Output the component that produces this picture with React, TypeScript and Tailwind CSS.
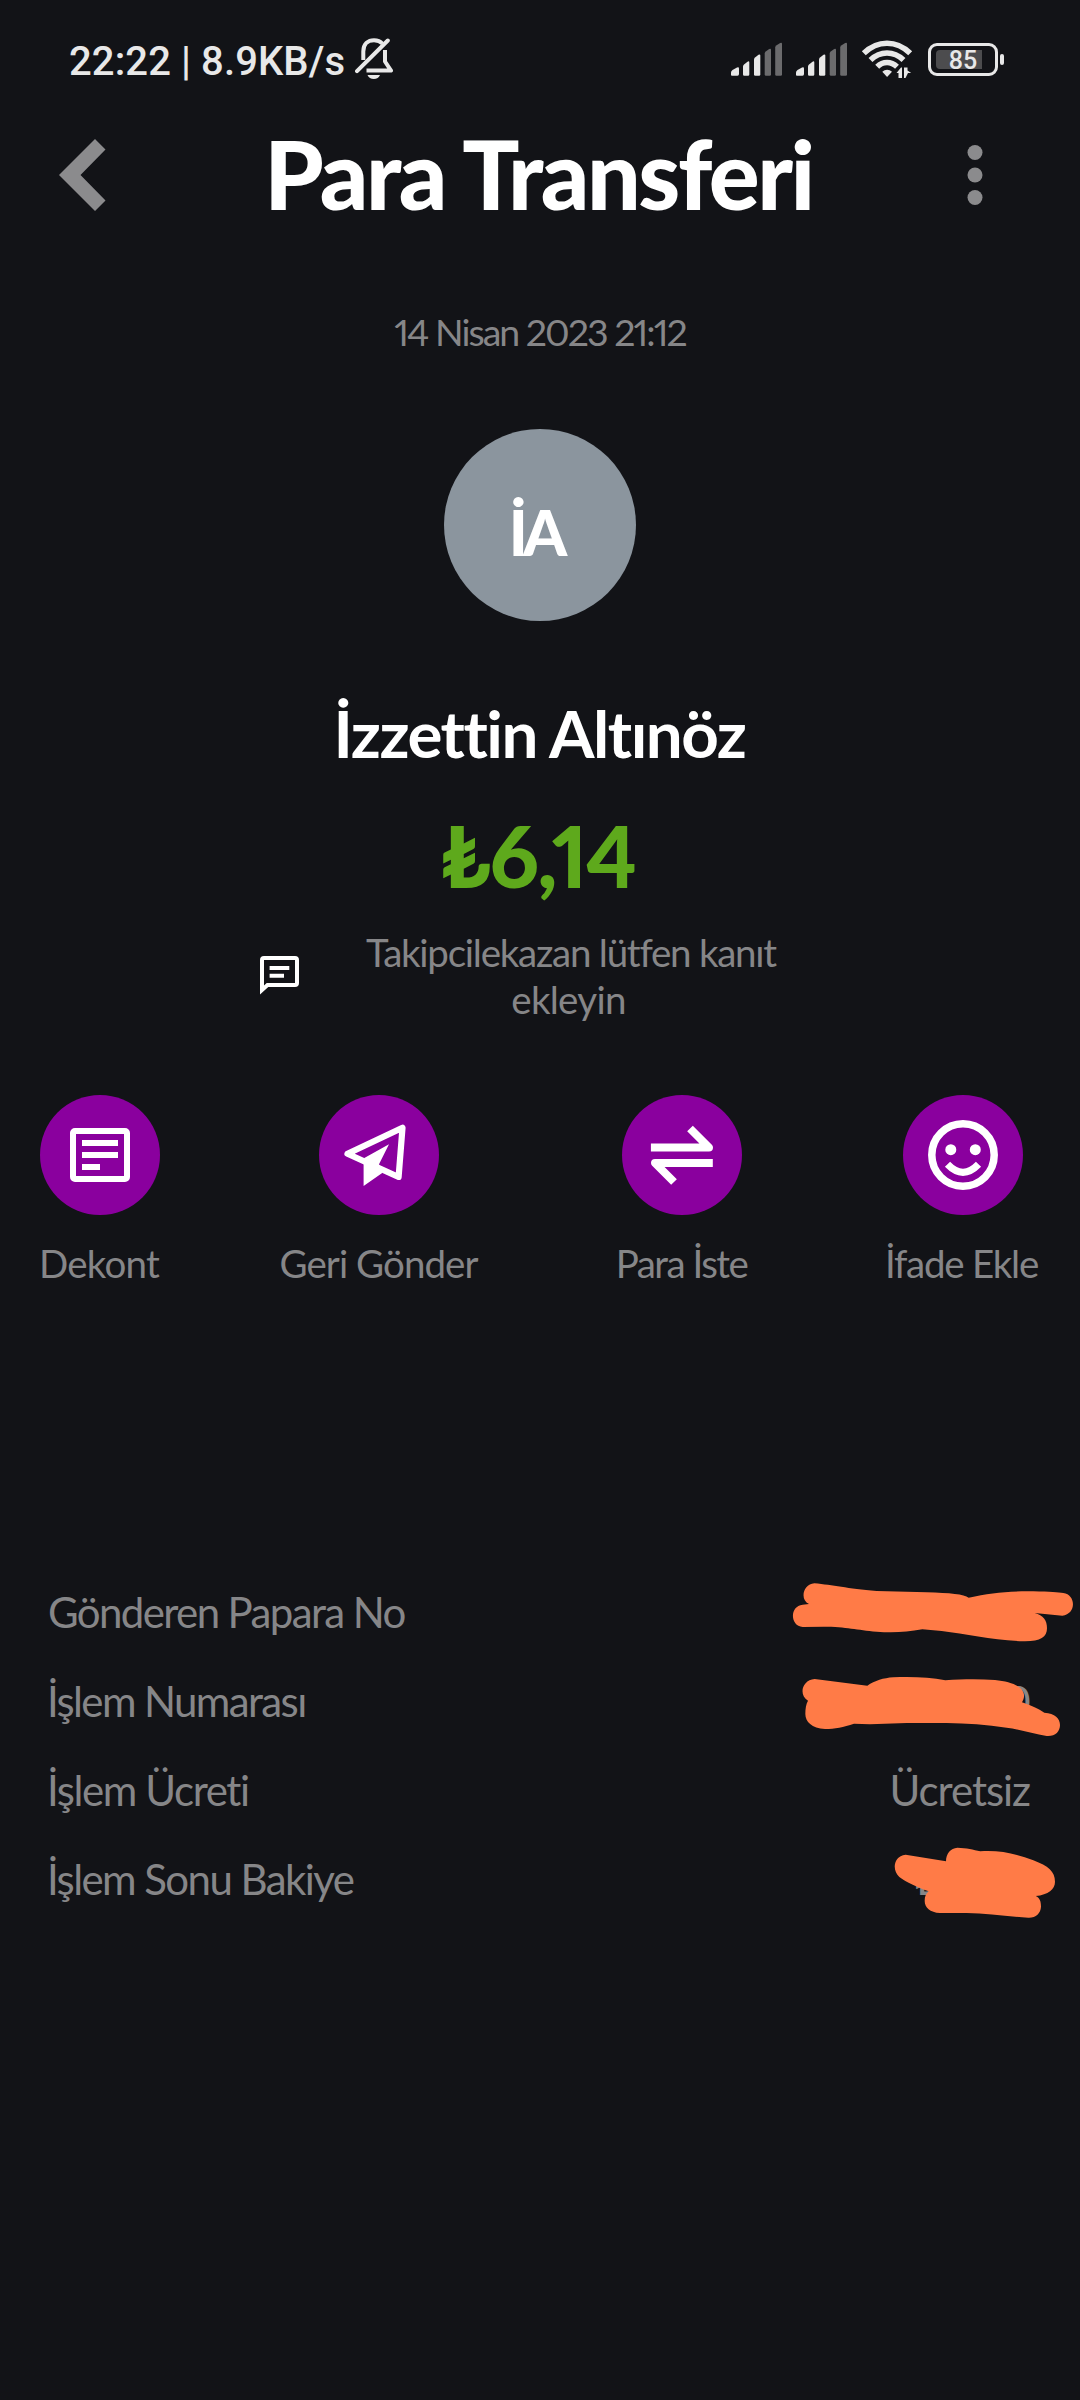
const SignalIcon = () => {
  return (
    <svg width="53" height="48" viewBox="0 0 53 48" fill="#e8e8e8">
      <path d="M0 38V35.500Q0 34 1.500 33L6 30.500Q8 29.700 8 31.500V37Q8 38.700 6.500 38.700H1Q0 38.700 0 38Z" />
      <path d="M12 37.500V29.500Q12 28.300 13 27.500L16.500 24.700Q18.300 23.700 18.300 25.500V37.500Q18.300 38.700 17 38.700H13.300Q12 38.700 12 37.500Z" />
      <path d="M23 37.500V22.500Q23 21.300 24 20.500L27.500 17.800Q29.300 16.800 29.300 18.500V37.500Q29.300 38.700 28 38.700H24.300Q23 38.700 23 37.500Z" />
      <g fill="#6b6b6d">
        <path d="M33.700 37.500V16.500Q33.700 15.300 34.700 14.500L38.200 12Q40 11 40 12.700V37.500Q40 38.700 38.700 38.700H35Q33.700 38.700 33.700 37.500Z" />
        <path d="M44.200 37.500V10.500Q44.200 9.300 45.200 8.500L49.200 6Q51 5 51 6.700V37.500Q51 38.700 49.700 38.700H45.500Q44.200 38.700 44.200 37.500Z" />
      </g>
    </svg>
  );
};

const BellOffIcon = () => {
  return (
    <svg
      className="-mt-[5px] ml-[10px]"
      width="38"
      height="42"
      viewBox="0 0 38 42"
      fill="none"
      stroke="#e8e8e8"
      strokeWidth="4"
      strokeLinecap="round"
      strokeLinejoin="round"
    >
      <path d="M2 33.200L32.800 2.500" />
      <path d="M8.300 22V13.500C8.300 6 13 2.200 19 2.200C22.500 2.200 25.300 3.200 27.300 5.500" strokeLinecap="butt" />
      <path d="M30 12V23.500L36 32.600H11.500" strokeLinecap="butt" />
      <path d="M12.500 37H25C24 39.800 21.700 41 18.800 41S13.500 39.800 12.500 37Z" fill="#e8e8e8" stroke="none" />
    </svg>
  );
};

const WifiIcon = () => {
  return (
    <svg className="ml-[12px]" width="52" height="48" viewBox="0 0 52 48" fill="none" stroke="#e8e8e8">
      <path d="M2.800 16.300C16.500 2.900 35.500 2.900 49.200 16.300" strokeWidth="5.600" />
      <path d="M9.500 23C19.300 13.600 32.700 13.600 42.500 23" strokeWidth="5.600" />
      <path d="M16.200 29.700C22 24 30 24 36 29.700" strokeWidth="5.600" />
      <path d="M21.300 34.800C24 32 28.200 32 31 34.800L26.100 40Z" fill="#e8e8e8" stroke="none" />
      <path d="M35.500 36L40 30.500H41V41H37.500V36ZM43 30.500H46.500V33.500L50.200 36H47L44.500 41H43Z" fill="#e8e8e8" stroke="none" />
    </svg>
  );
};

const StatusBar = () => {
  return (
    <div className="flex h-[122px] items-center justify-between pr-[76px] pl-[69px]">
      <div className="flex items-center">
        <span className="mt-[2px] font-[Roboto] text-[40px] leading-[48px] font-medium tracking-[0.1px] whitespace-nowrap text-[#e8e8e8]">
          22:22 | 8.9KB/s
        </span>
        <BellOffIcon />
      </div>
      <div className="flex items-center">
        <SignalIcon />
        <div className="w-3" />
        <SignalIcon />
        <WifiIcon />
        <div className="mt-[-4px] ml-[15px] flex items-center">
          <div className="relative flex h-[33px] w-[70px] items-center justify-center rounded-[9px] border-[3px] border-[#e8e8e8] font-[Roboto] text-[25px] font-medium text-[#e8e8e8]">
            <div className="absolute top-[4px] left-[5px] h-[19px] w-[46px] rounded-l-[4px] bg-[#4c4c4e]" />
            <span className="relative mt-[3px] leading-[30px]">85</span>
          </div>
          <div className="ml-[2px] h-[11px] w-[4px] rounded-[2px] bg-[#e8e8e8]" />
        </div>
      </div>
    </div>
  );
};

const Header = () => {
  return (
    <div className="flex h-[106px] items-center justify-between pr-[97px] pl-[59px]">
      <svg width="47" height="72" viewBox="0 0 47 72" fill="#8b8b8d">
        <path d="M0 36L36 0L46.500 10.500L21.500 36L46.500 61.500L36 72Z" />
      </svg>
      <h1 className="-mt-1 ml-[4px] text-[95px] leading-[100px] font-black tracking-[-2.450px] whitespace-nowrap text-white">
        Para Transferi
      </h1>
      <svg width="16" height="60" viewBox="0 0 16 60" fill="#8b8b8d">
        <circle cx="8" cy="7.500" r="7.500" />
        <circle cx="8" cy="30" r="7.500" />
        <circle cx="8" cy="52.500" r="7.500" />
      </svg>
    </div>
  );
};

const ActionIcon = ({ children }: { children: React.ReactNode }) => {
  return (
    <svg
      className="rounded-full bg-[#8a009e]"
      width="120"
      height="120"
      viewBox="0 0 120 120"
      fill="none"
      stroke="white"
      strokeLinejoin="round"
    >
      {children}
    </svg>
  );
};

const Actions = () => {
  return (
    <div className="mt-[72px] flex text-[38.500px] leading-[44px] whitespace-nowrap text-[#868688]">
      <div className="ml-[40px] flex w-[120px] flex-col items-center gap-[26px]">
        <ActionIcon>
          <rect x="33" y="36" width="54" height="48" rx="2" strokeWidth="6" />
          <path d="M42 48H78M42 60H78M42 72H60" strokeWidth="6" />
        </ActionIcon>
        <span className="mr-[2px] tracking-[-0.800px]">Dekont</span>
      </div>
      <div className="ml-[119px] flex w-[200px] flex-col items-center gap-[26px]">
        <ActionIcon>
          <path d="M28.500 58.700L83.500 32.700L79.600 82Z" strokeWidth="6.200" />
          <path d="M70 49.300L60 69.300L63.200 78L44.600 91V66L45.300 63Z" fill="white" stroke="none" />
        </ActionIcon>
        <span className="mr-px tracking-[-0.950px]">Geri Gönder</span>
      </div>
      <div className="ml-[138px] flex w-[130px] flex-col items-center gap-[26px]">
        <ActionIcon>
          <path d="M28.900 52.500H87L68 33.500" strokeWidth="8" />
          <path d="M90.800 68H33L52 87" strokeWidth="8" />
        </ActionIcon>
        <span className="mr-px tracking-[-1.500px]">Para İste</span>
      </div>
      <div className="ml-[140px] flex w-[152px] flex-col items-center gap-[26px]">
        <ActionIcon>
          <circle cx="60" cy="60" r="31.200" strokeWidth="7.500" />
          <circle cx="47.800" cy="54.700" r="5.500" fill="white" stroke="none" />
          <circle cx="72.300" cy="54.700" r="5.500" fill="white" stroke="none" />
          <path d="M44.500 69.300Q60 85.300 75.500 69.300" strokeWidth="7.200" />
        </ActionIcon>
        <span className="mr-[3px] tracking-[-1.250px]">İfade Ekle</span>
      </div>
    </div>
  );
};

const Details = () => {
  return (
    <div className="mt-[282px] text-[42px] leading-[91px] tracking-[-1.620px] whitespace-nowrap text-[#868688]">
      <div className="relative flex h-[89px] justify-between pr-[50px] pl-[48px]">
        <span>Gönderen Papara No</span>
        <svg className="absolute top-0 right-0" width="320" height="89" viewBox="0 21 960 267" fill="#ff7b47">
          <path d="M163 70C220 75 260 86 350 93L500 97C570 99 612 103 626 113C690 99 740 93 820 94C870 95 895 97 910 99C948 104 950 162 907 167L824 159C850 167 861 180 861 205C861 232 840 245 790 244C700 241 620 222 545 213L487 208C440 216 400 219 350 215C290 210 260 200 190 200L128 201C90 198 88 138 128 134L147 132C118 118 130 72 163 70Z" />
        </svg>
      </div>
      <div className="relative flex h-[89px] justify-between pr-[51px] pl-[47px]">
        <span>İşlem Numarası</span>
        <span>0</span>
        <svg className="absolute top-0 right-0" width="320" height="89" viewBox="0 288 960 267" fill="#ff7b47">
          <path d="M164 357L322 377C345 362 370 354 400 352C460 350 510 352 556 361C610 357 660 357 705 360C755 365 790 380 792 404C793 413 790 421 786 427C815 437 835 446 853 458C885 460 900 475 900 495C900 515 885 530 860 528C820 522 780 508 740 503C680 494 620 490 560 489L440 489L330 493L282 491C250 501 225 507 195 507C155 505 136 485 136 462C136 445 138 433 144 422C115 405 126 360 164 357Z" />
        </svg>
      </div>
      <div className="flex h-[89px] justify-between pr-[50px] pl-[47px]">
        <span className="tracking-[-1.400px]">İşlem Ücreti</span>
        <span className="tracking-[-1.050px]">Ücretsiz</span>
      </div>
      <div className="relative flex h-[89px] justify-between pr-[143px] pl-[47px]">
        <span className="tracking-[-1.570px]">İşlem Sonu Bakiye</span>
        <span>₺</span>
        <svg className="absolute top-0 right-0" width="320" height="89" viewBox="0 282 960 267" fill="#ff7b47">
          <path d="M437 344L558 364C558 340 572 325 592 323C620 324 640 329 661 334C720 330 770 342 820 361C865 378 885 395 885 425C885 448 865 464 827 468C840 474 843 485 843 500C842 520 827 534 805 533C740 529 680 520 620 519L540 519C510 517 494 503 494 482C494 470 498 461 506 454C470 441 440 427 418 411C398 395 396 350 437 344Z" />
        </svg>
      </div>
    </div>
  );
};

const App = () => {
  return (
    <div className="flex h-[2400px] w-[1080px] flex-col overflow-hidden bg-[#121317] font-[Lato,sans-serif]">
      <StatusBar />
      <Header />
      <div className="mt-[82px] text-center text-[37.500px] leading-[44px] tracking-[-2px] text-[#868688] proportional-nums">
        14 Nisan 2023 21:12
      </div>
      <div className="mt-[75px] flex h-[192px] w-[192px] items-center justify-center self-center rounded-full bg-[#8b959e] pt-[14px] pr-[9px] text-[63px] font-black tracking-[-5px] text-white">
        İA
      </div>
      <div className="mt-[72px] pr-px text-center text-[65.500px] leading-[80px] font-bold tracking-[-1.500px] text-white">
        İzzettin Altınöz
      </div>
      <div className="mt-[32px] pr-[4px] text-center text-[86px] leading-[100px] font-black text-[#5ea91c] proportional-nums">
        <span className="tracking-[-1px]">₺</span>
        <span className="tracking-[-2px]">6,14</span>
      </div>
      <div className="mt-[24px] flex items-center pl-[260px]">
        <svg className="mt-[-1px]" width="40" height="40" viewBox="0 0 40 40" fill="none" stroke="white" strokeWidth="4">
          <path d="M2 34V4Q2 2 4 2H35Q37 2 37 4V27Q37 29 35 29H7.500Z" />
          <path d="M9.600 12H29.300M9.600 19.700H24" />
        </svg>
        <p className="ml-[51px] w-[440px] text-center text-[38.500px] leading-[47px] tracking-[-1.250px] text-[#868688]">
          Takipcilekazan lütfen kanıt
          <br />
          <span className="mr-[5px] tracking-[-0.700px]">ekleyin</span>
        </p>
      </div>
      <Actions />
      <Details />
    </div>
  );
};

export default App;
